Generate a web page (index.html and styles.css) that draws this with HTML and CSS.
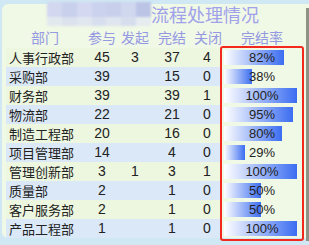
FILE: index.html
```html
<!DOCTYPE html>
<html lang="zh">
<head>
<meta charset="utf-8">
<link rel="stylesheet" href="styles.css">
</head>
<body>
<div class="card">
  <div class="main">
    <div class="title-row">
      <div class="mosaic">
        <span class="m1"></span><span class="m2"></span><span class="m3"></span><span class="m4"></span><span class="m5"></span><span class="m6"></span><span class="m7"></span>
        <span class="n1"></span><span class="n2"></span><span class="n3"></span><span class="n4"></span><span class="n5"></span><span class="n6"></span><span class="n7"></span>
      </div>
      <div class="title">流程处理情况</div>
    </div>
    <div class="grid head">
      <div class="c">部门</div>
      <div class="c">参与</div>
      <div class="c">发起</div>
      <div class="c">完结</div>
      <div class="c">关闭</div>
      <div class="c">完结率</div>
    </div>
    <div class="rows">
      <div class="grid row g"><div class="dept">人事行政部</div><div class="num">45</div><div class="num">3</div><div class="num">37</div><div class="num">4</div><div class="rate"><div class="bar" style="width:82%"></div><span class="pct">82%</span></div></div>
      <div class="grid row b"><div class="dept">采购部</div><div class="num">39</div><div class="num"></div><div class="num">15</div><div class="num">0</div><div class="rate"><div class="bar" style="width:38%"></div><span class="pct">38%</span></div></div>
      <div class="grid row g"><div class="dept">财务部</div><div class="num">39</div><div class="num"></div><div class="num">39</div><div class="num">1</div><div class="rate"><div class="bar" style="width:100%"></div><span class="pct">100%</span></div></div>
      <div class="grid row b"><div class="dept">物流部</div><div class="num">22</div><div class="num"></div><div class="num">21</div><div class="num">0</div><div class="rate"><div class="bar" style="width:95%"></div><span class="pct">95%</span></div></div>
      <div class="grid row g"><div class="dept">制造工程部</div><div class="num">20</div><div class="num"></div><div class="num">16</div><div class="num">0</div><div class="rate"><div class="bar" style="width:80%"></div><span class="pct">80%</span></div></div>
      <div class="grid row b"><div class="dept">项目管理部</div><div class="num">14</div><div class="num"></div><div class="num">4</div><div class="num">0</div><div class="rate"><div class="bar" style="width:29%"></div><span class="pct">29%</span></div></div>
      <div class="grid row g"><div class="dept">管理创新部</div><div class="num">3</div><div class="num">1</div><div class="num">3</div><div class="num">1</div><div class="rate"><div class="bar" style="width:100%"></div><span class="pct">100%</span></div></div>
      <div class="grid row b"><div class="dept">质量部</div><div class="num">2</div><div class="num"></div><div class="num">1</div><div class="num">0</div><div class="rate"><div class="bar" style="width:50%"></div><span class="pct">50%</span></div></div>
      <div class="grid row g"><div class="dept">客户服务部</div><div class="num">2</div><div class="num"></div><div class="num">1</div><div class="num">0</div><div class="rate"><div class="bar" style="width:50%"></div><span class="pct">50%</span></div></div>
      <div class="grid row b"><div class="dept">产品工程部</div><div class="num">1</div><div class="num"></div><div class="num">1</div><div class="num">0</div><div class="rate"><div class="bar" style="width:100%"></div><span class="pct">100%</span></div></div>
      <div class="highlight"></div>
    </div>
  </div>
  <div class="edge"></div>
</div>
</body>
</html>
```

FILE: styles.css
```css
html, body {
  margin: 0;
  padding: 0;
}
body {
  width: 309px;
  height: 245px;
  overflow: hidden;
  background: #cfe8f4;
  font-family: "Noto Sans CJK SC", "Liberation Sans", sans-serif;
  padding: 4px 0 0 2px;
  box-sizing: border-box;
}
.card {
  display: flex;
  background: #f0f8e6;
  border-radius: 6px 0 0 6px;
}
.main {
  flex: 1;
  padding: 0 2px 0 4px;
}
.edge {
  width: 3px;
  background: #8e9383;
  margin: 4px 0 -3px 0;
}
.title-row {
  display: flex;
  height: 20px;
  padding-left: 41px;
}
.mosaic {
  width: 104px;
  height: 24px;
  margin-top: -2px;
  display: grid;
  grid-template-columns: repeat(7, 1fr);
  grid-template-rows: 15px 9px;
  filter: blur(1.2px);
}
.m1 { background: #d3d8f0; }
.m2 { background: #c9d0ec; }
.m3 { background: #d4d9f1; }
.m4 { background: #cbd2ee; }
.m5 { background: #c7cfeb; }
.m6 { background: #d0d7ef; }
.m7 { background: #bcc4e6; }
.n1 { background: #e2e9ee; }
.n2 { background: #dbe2ed; }
.n3 { background: #e0e7ef; }
.n4 { background: #d7dfee; }
.n5 { background: #dfe6ef; }
.n6 { background: #d6deee; }
.n7 { background: #e6ecf0; }
.title {
  font-size: 18px;
  line-height: 20px;
  color: #a0a1ea;
  white-space: nowrap;
}
.grid {
  display: grid;
  grid-template-columns: 78px 36px 30px 44px 26px 84px;
}
.head {
  height: 24px;
  padding-top: 3px;
  box-sizing: border-box;
  font-size: 14px;
  line-height: 20px;
  color: #9499e2;
}
.c {
  text-align: center;
  white-space: nowrap;
}
.rows {
  position: relative;
}
.row {
  height: 19px;
  line-height: 19px;
  color: #222;
}
.row.g > div { background: #edf6df; }
.row.b > div { background: #dbe8f7; }
.row > .rate { background: #f0f8e6 !important; }
.dept {
  font-size: 13px;
  padding-left: 3px;
  white-space: nowrap;
}
.num {
  text-align: center;
  font-family: "Liberation Sans", sans-serif;
  font-size: 14px;
}
.rate {
  display: grid;
  padding: 2px 7px 2px 4px;
}
.bar, .pct {
  grid-area: 1 / 1;
}
.bar {
  height: 15px;
  background: linear-gradient(to right, #ffffff, #3b6df1);
}
.pct {
  font-family: "Liberation Sans", sans-serif;
  font-size: 13px;
  line-height: 15px;
  text-align: center;
  padding-left: 3px;
  color: #222;
}
.highlight {
  position: absolute;
  left: 214px;
  top: -2px;
  width: 84px;
  bottom: -3px;
  border: 2px solid #f2291c;
  border-radius: 3px;
  box-sizing: border-box;
}
```
